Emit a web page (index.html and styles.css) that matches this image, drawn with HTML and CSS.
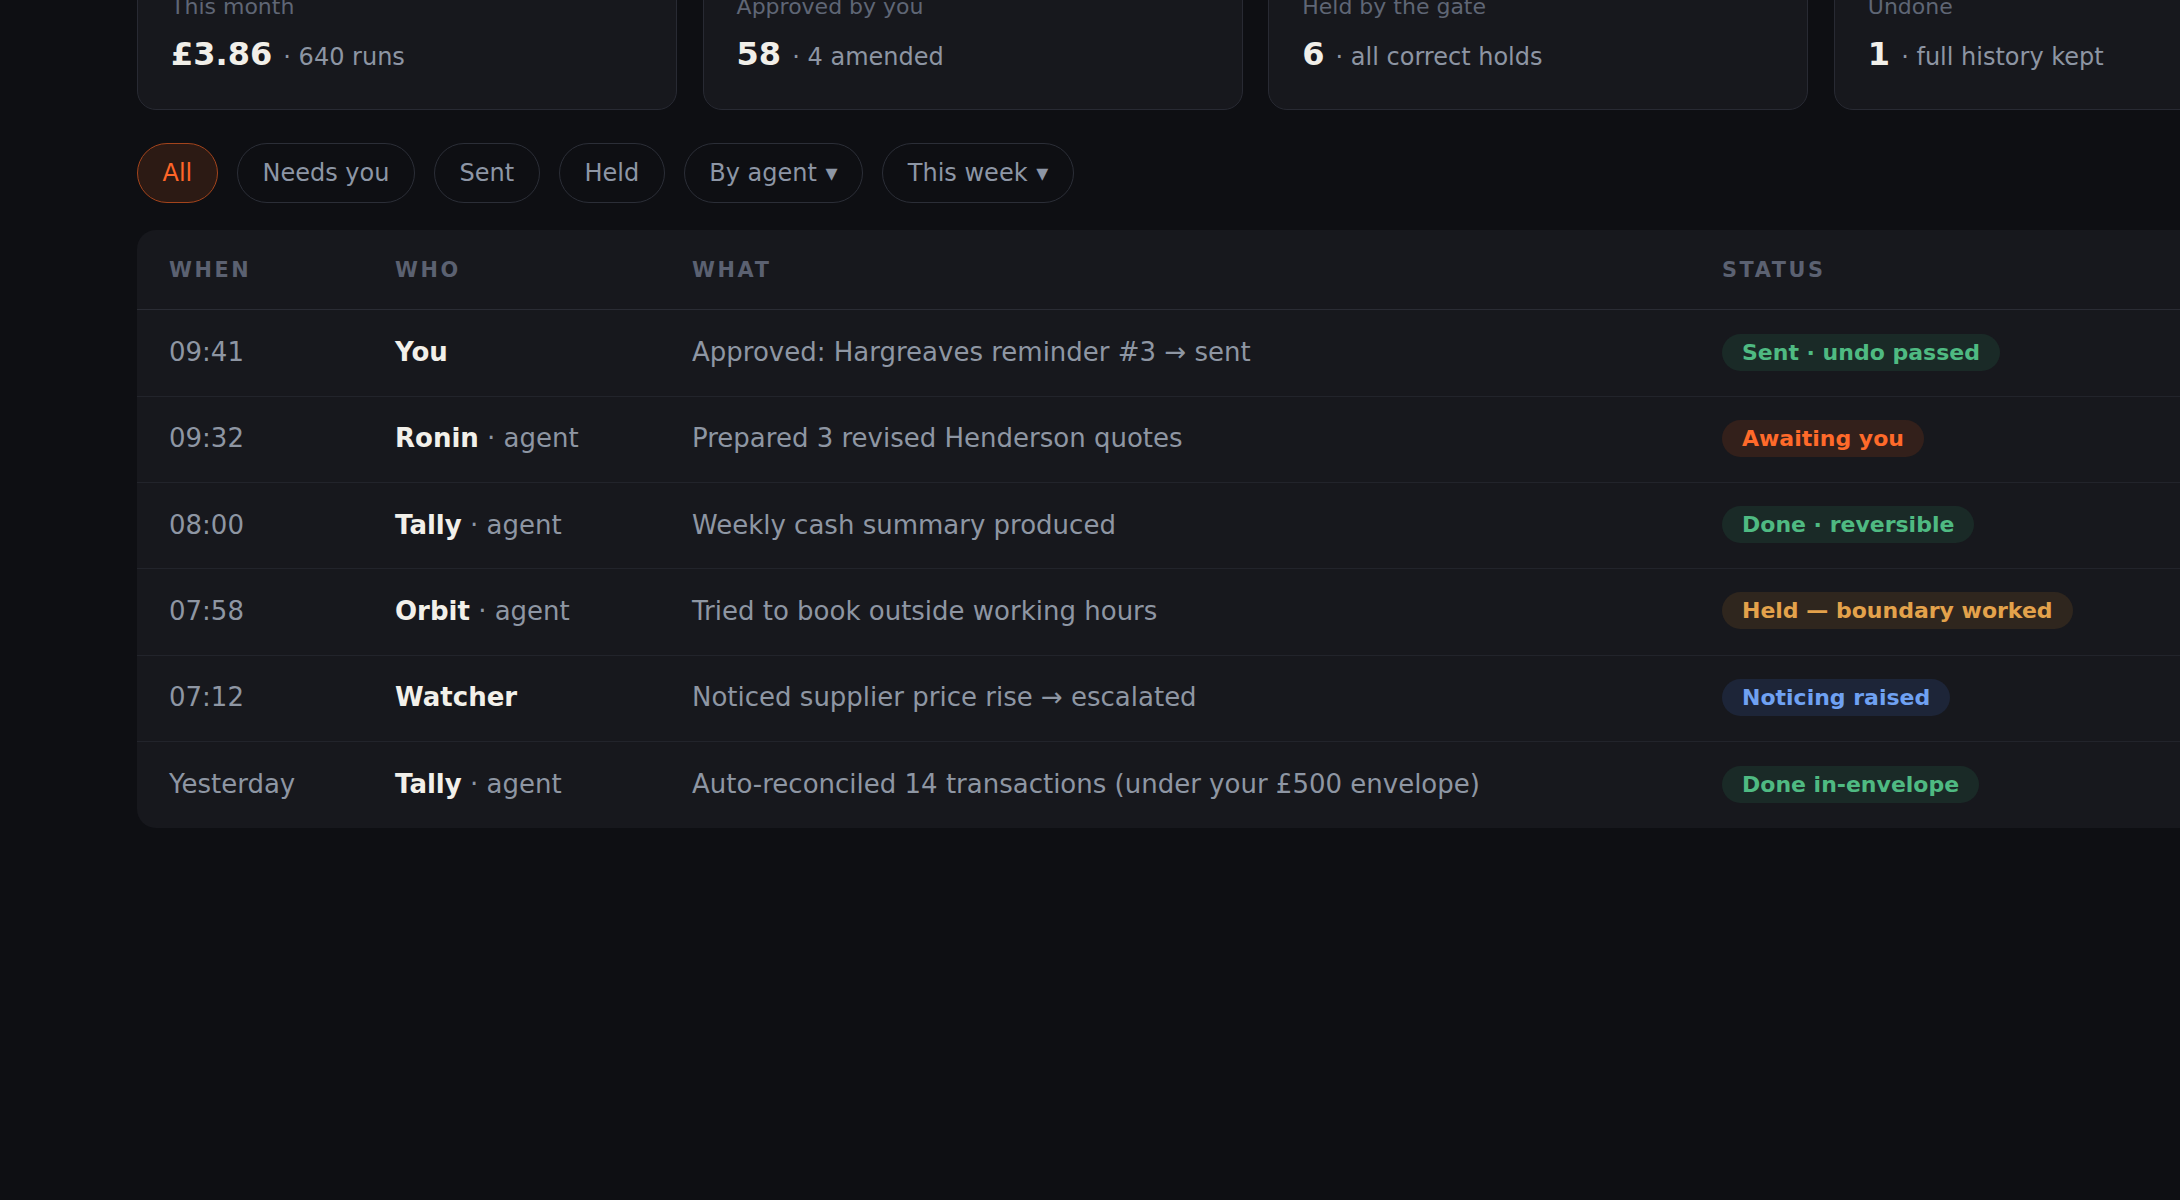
FILE: index.html
```html
<!DOCTYPE html>
<html lang="en">
<head>
<meta charset="utf-8">
<title>Activity log</title>
<link rel="stylesheet" href="styles.css">
</head>
<body>
<main class="page">
  <section class="stats">
    <div class="stat">
      <div class="stat-label">This month</div>
      <div class="stat-value">£3.86 <span class="stat-note">· 640 runs</span></div>
    </div>
    <div class="stat">
      <div class="stat-label">Approved by you</div>
      <div class="stat-value">58 <span class="stat-note">· 4 amended</span></div>
    </div>
    <div class="stat">
      <div class="stat-label">Held by the gate</div>
      <div class="stat-value">6 <span class="stat-note">· all correct holds</span></div>
    </div>
    <div class="stat">
      <div class="stat-label">Undone</div>
      <div class="stat-value">1 <span class="stat-note">· full history kept</span></div>
    </div>
  </section>

  <nav class="filters">
    <button class="chip chip-active">All</button>
    <button class="chip">Needs you</button>
    <button class="chip">Sent</button>
    <button class="chip">Held</button>
    <button class="chip">By agent <span class="caret">▾</span></button>
    <button class="chip">This week <span class="caret">▾</span></button>
  </nav>

  <section class="log">
    <div class="log-row log-head">
      <span>When</span><span>Who</span><span>What</span><span>Status</span>
    </div>
    <div class="log-row">
      <span class="when">09:41</span>
      <span class="who"><b>You</b></span>
      <span class="what">Approved: Hargreaves reminder #3 → sent</span>
      <span><span class="badge badge-green">Sent · undo passed</span></span>
    </div>
    <div class="log-row">
      <span class="when">09:32</span>
      <span class="who"><b>Ronin</b> · agent</span>
      <span class="what">Prepared 3 revised Henderson quotes</span>
      <span><span class="badge badge-orange">Awaiting you</span></span>
    </div>
    <div class="log-row">
      <span class="when">08:00</span>
      <span class="who"><b>Tally</b> · agent</span>
      <span class="what">Weekly cash summary produced</span>
      <span><span class="badge badge-green">Done · reversible</span></span>
    </div>
    <div class="log-row">
      <span class="when">07:58</span>
      <span class="who"><b>Orbit</b> · agent</span>
      <span class="what">Tried to book outside working hours</span>
      <span><span class="badge badge-amber">Held — boundary worked</span></span>
    </div>
    <div class="log-row">
      <span class="when">07:12</span>
      <span class="who"><b>Watcher</b></span>
      <span class="what">Noticed supplier price rise → escalated</span>
      <span><span class="badge badge-blue">Noticing raised</span></span>
    </div>
    <div class="log-row">
      <span class="when">Yesterday</span>
      <span class="who"><b>Tally</b> · agent</span>
      <span class="what">Auto-reconciled 14 transactions (under your £500 envelope)</span>
      <span><span class="badge badge-green">Done in-envelope</span></span>
    </div>
  </section>
</main>
</body>
</html>
```

FILE: styles.css
```css
* { box-sizing: border-box; }

html, body {
  margin: 0;
  background: #0e0f13;
  overflow: hidden;
}

body {
  font-family: "DejaVu Sans", "Noto Sans", sans-serif;
  width: 2180px;
  height: 1200px;
}

.page {
  width: 2374px;
  margin-top: -39px;
  padding-left: 137px;
}

/* stat cards */
.stats {
  display: grid;
  grid-template-columns: repeat(4, 540px);
  gap: 25.6px;
}

.stat {
  background: #17181d;
  border: 1px solid #282a33;
  border-radius: 19px;
  padding: 32px 32px 32px 33px;
}

.stat-label {
  font-size: 22px;
  line-height: 25.6px;
  color: #5f6675;
}

.stat-value {
  margin-top: 14px;
  font-size: 32px;
  line-height: 40px;
  font-weight: 700;
  color: #f1efe9;
}

.stat-note {
  font-size: 24px;
  font-weight: 400;
  color: #8d95a3;
}

/* filter chips */
.filters {
  display: flex;
  gap: 19.2px;
  margin-top: 33.5px;
}

.chip {
  font-family: inherit;
  font-size: 24px;
  line-height: normal;
  padding: 15px 24.5px;
  border: 1px solid #2b2e37;
  border-radius: 999px;
  background: transparent;
  color: #8d96a5;
  margin: 0;
}

.caret {
  margin-left: 1px;
}

.chip-active {
  background: #2c1a14;
  border-color: #a3441c;
  color: #ff6528;
}

/* log table */
.log {
  margin-top: 27px;
  background: #17181d;
  border-radius: 19px;
  overflow: hidden;
}

.log-row {
  display: grid;
  grid-template-columns: 226px 297px 1030px 1fr;
  align-items: center;
  padding: 0 32px 2px;
  height: 86.3px;
  border-bottom: 1px solid #22242b;
  font-size: 26px;
  color: #8e96a3;
}

.log-row:last-child {
  border-bottom: none;
}

.log-head {
  height: 80.3px;
  padding-bottom: 0;
  font-size: 20.8px;
  font-weight: 700;
  text-transform: uppercase;
  letter-spacing: 2.6px;
  color: #5b6171;
  border-bottom: 1px solid #2a2c34;
}

.who b {
  color: #f2f0ea;
  font-weight: 700;
}

.badge {
  display: inline-block;
  font-size: 22px;
  font-weight: 700;
  line-height: normal;
  padding: 6px 20px;
  border-radius: 999px;
}

.badge-green { background: #1a2a27; color: #4fba82; }
.badge-orange { background: #33201b; color: #ff6a2a; }
.badge-amber { background: #2f261e; color: #e3a24b; }
.badge-blue { background: #1d2538; color: #6fa1f2; }
```
